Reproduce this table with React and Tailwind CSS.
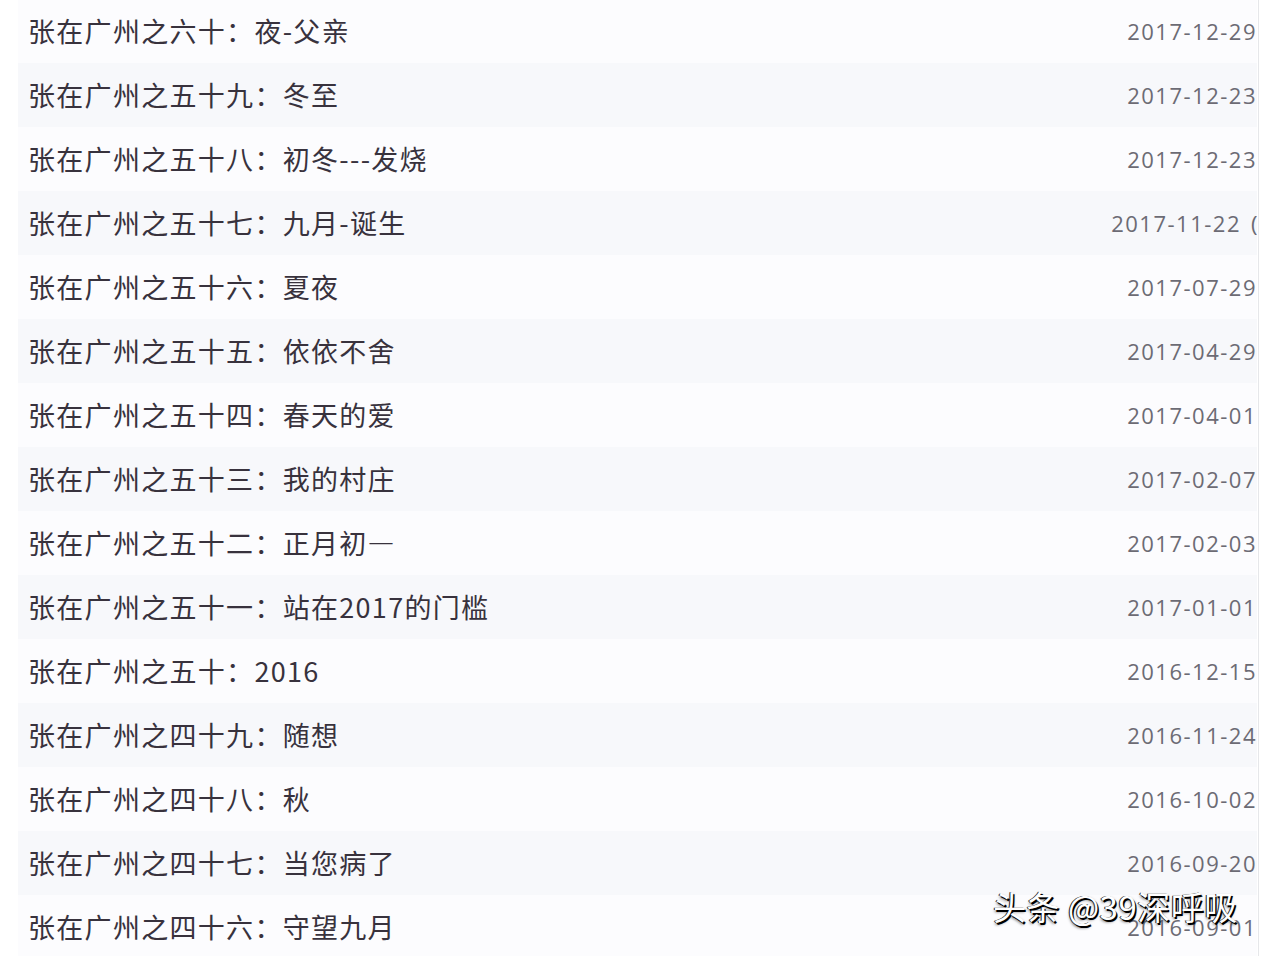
import React from 'react';

const rows = [
  ['张在广州之六十：夜-父亲', '2017-12-29'],
  ['张在广州之五十九：冬至', '2017-12-23'],
  ['张在广州之五十八：初冬---发烧', '2017-12-23'],
  ['张在广州之五十七：九月-诞生', '2017-11-22', true],
  ['张在广州之五十六：夏夜', '2017-07-29'],
  ['张在广州之五十五：依依不舍', '2017-04-29'],
  ['张在广州之五十四：春天的爱', '2017-04-01'],
  ['张在广州之五十三：我的村庄', '2017-02-07'],
  ['张在广州之五十二：正月初—', '2017-02-03'],
  ['张在广州之五十一：站在2017的门槛', '2017-01-01'],
  ['张在广州之五十：2016', '2016-12-15'],
  ['张在广州之四十九：随想', '2016-11-24'],
  ['张在广州之四十八：秋', '2016-10-02'],
  ['张在广州之四十七：当您病了', '2016-09-20'],
  ['张在广州之四十六：守望九月', '2016-09-01'],
];

const App = () => {
  return (
    <div lang="zh-CN" className="relative w-[1262px] h-[956px] overflow-hidden bg-white">
      <div className="flex flex-col pl-[18px] pr-[1px] border-r border-[#e6e7ea] w-[1259px] -mt-[1px]">
        {rows.map(([title, date, extra], i) => (
          <div
            key={i}
            className={`h-[64px] flex items-center justify-between pl-[10px] ${i % 2 ? 'bg-[#f7f8fb]' : 'bg-[#fcfcfe]'}`}
          >
            <span
              className="text-[27px] tracking-[1.3px] text-[#38323d]"
              style={{ fontFamily: '"Noto Sans CJK SC", "Noto Sans", sans-serif' }}
            >
              {title}
            </span>
            <span
              className="text-[22px] tracking-[1.5px] text-[#6c6b74] whitespace-nowrap"
              style={{ fontFamily: '"Open Sans", "Noto Sans", sans-serif' }}
            >
              {date}
              {extra && <span className="ml-[10px] inline-block w-[6px] overflow-hidden align-bottom">(</span>}
            </span>
          </div>
        ))}
      </div>

      {/* Watermark */}
      <div
        className="absolute left-[993px] top-[882px] text-[33px] text-white tracking-[0.5px] [text-shadow:1.5px_1.5px_0_#000,-1px_0_0_#222,0_2px_3px_rgba(0,0,0,0.6)]"
        style={{ fontFamily: '"Noto Sans CJK SC", "Open Sans", sans-serif' }}
      >
        头条 @39深呼吸
      </div>
    </div>
  );
};

export default App;
